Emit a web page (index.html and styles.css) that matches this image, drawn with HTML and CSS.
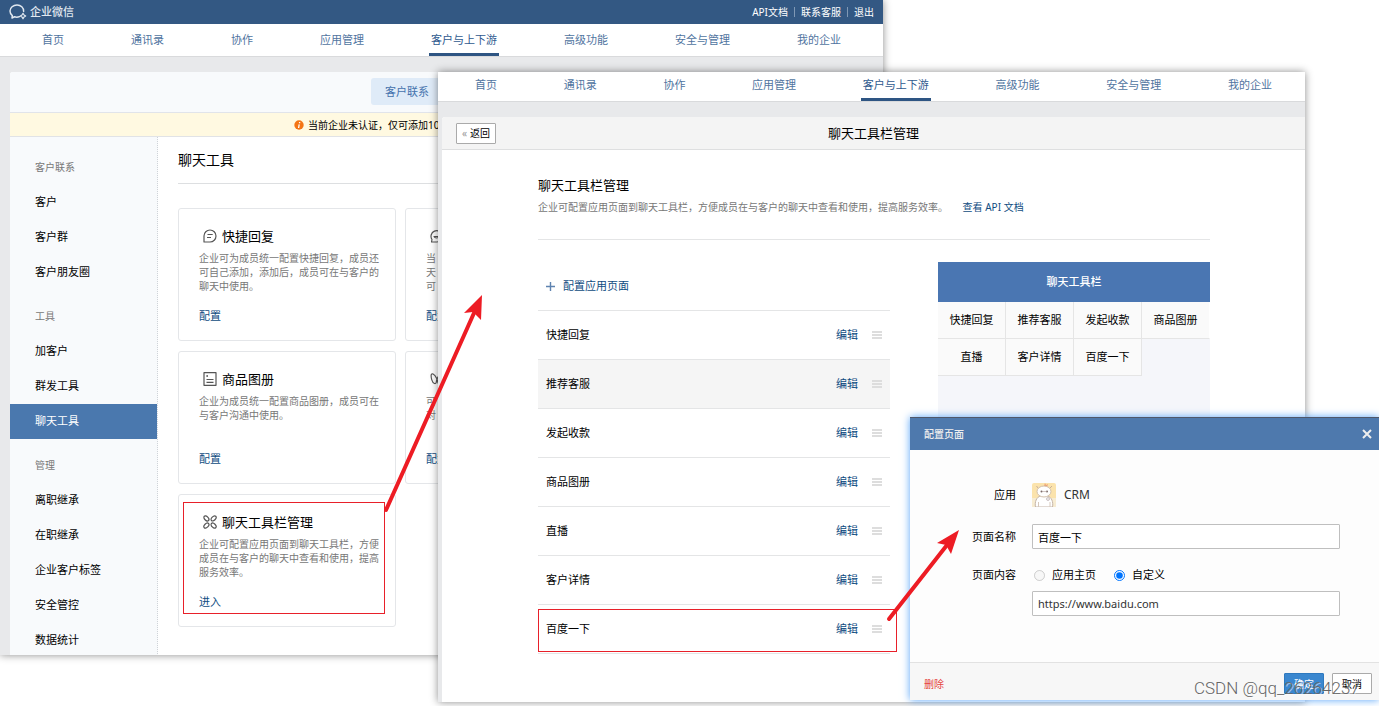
FILE: index.html
```html
<!DOCTYPE html>
<html lang="zh-CN">
<head>
<meta charset="utf-8">
<title>企业微信</title>
<link rel="stylesheet" href="styles.css">
</head>
<body>
<div class="desktop">

  <section class="window window-tools">
    <header class="topbar">
      <a class="brand" href="#">
        <svg class="brand-logo" viewBox="0 0 18 16" width="18" height="16" fill="none" stroke="currentColor" stroke-width="1.5" stroke-linecap="round" stroke-linejoin="round">
          <path d="M14.6 7.4C14.8 3.6 11.8 1 8 1S1 3.600 1 7c0 2 .9 3.500 2.300 4.600L3 14l2.500-1.200c1.700.5 3.500.4 5-.2"/>
          <path d="M14 9.300l1 1.700 1.700 1-1.700 1-1 1.800-1-1.800-1.700-1 1.700-1z" stroke-width="1.200"/>
        </svg>
        <span>企业微信</span>
      </a>
      <nav class="toplinks">
        <a href="#">API文档</a><a href="#">联系客服</a><a href="#">退出</a>
      </nav>
    </header>
    <nav class="mainnav">
      <a href="#">首页</a><a href="#">通讯录</a><a href="#">协作</a><a href="#">应用管理</a><a href="#" class="current">客户与上下游</a><a href="#">高级功能</a><a href="#">安全与管理</a><a href="#">我的企业</a>
    </nav>
    <div class="panel">
      <div class="tabs"><button type="button" class="tab">客户联系</button></div>
      <div class="notice">
        <svg viewBox="0 0 10 10" width="10" height="10"><circle cx="5" cy="5" r="4.700" fill="#f47414"/><path d="M5.600 2v1.200M5.200 4.300L4.600 8" stroke="#fff" stroke-width="1.300"/></svg>
        <span>当前企业未认证，仅可添加10</span>
      </div>
      <div class="columns">
        <aside class="sidebar">
          <h3>客户联系</h3>
          <a href="#">客户</a><a href="#">客户群</a><a href="#">客户朋友圈</a>
          <h3>工具</h3>
          <a href="#">加客户</a><a href="#">群发工具</a><a href="#" class="selected">聊天工具</a>
          <h3>管理</h3>
          <a href="#">离职继承</a><a href="#">在职继承</a><a href="#">企业客户标签</a><a href="#">安全管控</a><a href="#">数据统计</a>
        </aside>
        <main class="tools">
          <h1>聊天工具</h1>
          <div class="cards">
            <article class="card">
              <h2><svg viewBox="0 0 14 14" width="14" height="14" class="icon"><path d="M1 13V7a6 6 0 1 1 6 6z"/><path d="M4.500 5.500h5.200M4 8.500h4"/></svg>快捷回复</h2>
              <p>企业可为成员统一配置快捷回复，成员还可自己添加，添加后，成员可在与客户的聊天中使用。</p>
              <a href="#">配置</a>
            </article>
            <article class="card">
              <h2><svg viewBox="0 0 14 14" width="14" height="14" class="icon"><path d="M2 10.500A5.700 5.700 0 1 1 7 13H1.500z"/><path d="M4 7.500c1 2 4 2 5.500 0z"/></svg></h2>
              <p>当<br>天<br>可</p>
              <a href="#">配置</a>
            </article>
            <article class="card">
              <h2><svg viewBox="0 0 14 14" width="14" height="14" class="icon"><path d="M1 .7h12v12.600H1z"/><path d="M3.500 4h1.300" stroke-width="1.800"/><path d="M3.500 7.500h7M3.500 10.300h7"/></svg>商品图册</h2>
              <p>企业为成员统一配置商品图册，成员可在与客户沟通中使用。</p>
              <a href="#">配置</a>
            </article>
            <article class="card">
              <h2><svg viewBox="0 0 14 14" width="14" height="14" class="icon"><path d="M7 7C4 1 1.500 1 1.200 3S2 11 4.500 11.500 6 9 7 7s3-6 5-5 .5 8-2 9.500S8 9 7 7z"/></svg></h2>
              <p>可<br>对</p>
              <a href="#">配置</a>
            </article>
            <article class="card">
              <h2><svg viewBox="0 0 14 14" width="14" height="14" class="icon"><g id="petals"><ellipse cx="3.400" cy="3.400" rx="3" ry="1.900" transform="rotate(45 3.400 3.400)"/><ellipse cx="10.600" cy="3.400" rx="3" ry="1.900" transform="rotate(-45 10.600 3.400)"/><ellipse cx="3.400" cy="10.600" rx="3" ry="1.900" transform="rotate(-45 3.400 10.600)"/><ellipse cx="10.600" cy="10.600" rx="3" ry="1.900" transform="rotate(45 10.600 10.600)"/></g></svg>聊天工具栏管理</h2>
              <p>企业可配置应用页面到聊天工具栏，方便成员在与客户的聊天中查看和使用，提高服务效率。</p>
              <a href="#">进入</a>
            </article>
          </div>
        </main>
      </div>
    </div>
  </section>

  <section class="window window-manage">
    <nav class="mainnav">
      <a href="#">首页</a><a href="#">通讯录</a><a href="#">协作</a><a href="#">应用管理</a><a href="#" class="current">客户与上下游</a><a href="#">高级功能</a><a href="#">安全与管理</a><a href="#">我的企业</a>
    </nav>
    <div class="manage-panel">
      <header class="manage-head">
        <button type="button" class="back"><span class="chevrons">«</span>返回</button>
        <h1>聊天工具栏管理</h1>
      </header>
      <main class="manage-body">
        <div class="intro">
          <h2>聊天工具栏管理</h2>
          <p>企业可配置应用页面到聊天工具栏，方便成员在与客户的聊天中查看和使用，提高服务效率。 <a href="#">查看 API 文档</a></p>
        </div>
        <div class="manage-columns">
          <ul class="pages">
            <li><button type="button" class="add"><svg viewBox="0 0 9 9" width="9" height="9"><path d="M4.500 0v9M0 4.500h9" stroke="#5f83b0" stroke-width="1.400"/></svg>配置应用页面</button></li>
            <li><span>快捷回复</span><a href="#">编辑</a><i class="grip"></i></li>
            <li class="hovered"><span>推荐客服</span><a href="#">编辑</a><i class="grip"></i></li>
            <li><span>发起收款</span><a href="#">编辑</a><i class="grip"></i></li>
            <li><span>商品图册</span><a href="#">编辑</a><i class="grip"></i></li>
            <li><span>直播</span><a href="#">编辑</a><i class="grip"></i></li>
            <li><span>客户详情</span><a href="#">编辑</a><i class="grip"></i></li>
            <li><span>百度一下</span><a href="#">编辑</a><i class="grip"></i></li>
          </ul>
          <div class="preview">
            <h3>聊天工具栏</h3>
            <div class="preview-grid">
              <span>快捷回复</span><span>推荐客服</span><span>发起收款</span><span>商品图册</span>
              <span>直播</span><span>客户详情</span><span>百度一下</span>
            </div>
          </div>
        </div>
      </main>
    </div>
  </section>

  <form class="dialog">
    <header class="dialog-head">
      <h2>配置页面</h2>
      <button type="button" class="close" aria-label="关闭"><svg viewBox="0 0 10 10" width="10" height="10"><path d="M1 1l8 8M9 1L1 9" stroke="currentColor" stroke-width="2"/></svg></button>
    </header>
    <div class="dialog-body">
      <span class="label">应用</span>
      <div class="app">
        <svg viewBox="0 0 24 24" width="24" height="24">
          <rect width="24" height="24" rx="2" fill="#fbe3ac"/>
          <path d="M0 15h24v9H0z" fill="#f7ecd2"/>
          <path d="M12 3l1-3 1 2 2-1-1 3z" fill="#f0a070"/>
          <path d="M6 5L4.500 3M18 5l2-2" stroke="#c9b09a"/>
          <path d="M3.500 24c-1-5 1-10 5-11h7c4 1 6 6 5 11z" fill="#fff" stroke="#c5b5a8"/>
          <path d="M6.500 24v-5M18 24v-5" stroke="#d6c8bc"/>
          <ellipse cx="12" cy="8.500" rx="7" ry="5.500" fill="#fff" stroke="#d2c0ac"/>
          <circle cx="9.500" cy="8.500" r="1" fill="#7a6a68"/><circle cx="15" cy="8.500" r="1" fill="#7a6a68"/>
          <path d="M10 8.500h5" stroke="#b0a09c" stroke-width=".6"/>
          <circle cx="16" cy="16" r="1.500" fill="#eee" stroke="#bbaeb0" stroke-width=".7"/>
        </svg>
        <span>CRM</span>
      </div>
      <label class="label" for="page-name">页面名称</label>
      <input class="text" id="page-name" type="text" value="百度一下">
      <span class="label">页面内容</span>
      <div class="choices">
        <label><input type="radio" name="content" disabled>应用主页</label>
        <label><input type="radio" name="content" checked>自定义</label>
      </div>
      <input class="text url" type="text" value="https://www.baidu.com" aria-label="页面地址">
    </div>
    <footer class="dialog-foot">
      <a class="delete" href="#">删除</a>
      <button type="button" class="primary">确定</button>
      <button type="button" class="plain">取消</button>
    </footer>
  </form>

  <svg class="marks" viewBox="0 0 1379 706" width="1379" height="706">
    <g fill="none" stroke="#e8202a">
      <rect x="183.500" y="502.500" width="201" height="111"/>
      <rect x="538.500" y="609.500" width="358" height="42"/>
    </g>
    <g stroke="#ed1c24" stroke-linecap="round" stroke-width="4">
      <path d="M386 510L474 313"/>
      <path d="M889 619L947 545"/>
    </g>
    <g fill="#ed1c24">
      <path d="M482 295l-18 18 9-1 8 8z"/>
      <path d="M959 530l-22 13 9 2 5 9z"/>
    </g>
  </svg>
  <span class="watermark">CSDN @qq_26264237</span>
</div>
</body>
</html>
```
FILE: styles.css
```css
* { box-sizing: border-box; }
body {
  margin: 0;
  background: #fff;
  color: #000;
  font: 11px/16px "Noto Sans", "Noto Sans CJK SC", sans-serif;
}
h1, h2, h3, p, ul { margin: 0; padding: 0; font-weight: 400; }
a { color: #0f4c81; text-decoration: none; }
button, input { font: inherit; color: inherit; margin: 0; }
button { cursor: pointer; }

.desktop { position: relative; min-height: 706px; overflow: hidden; }
.window { position: absolute; background: #e8e9eb; overflow: hidden; box-shadow: 0 0 8px rgba(0, 0, 0, .45); }
.window-tools { left: 0; top: 0; width: 883px; height: 655px; }
.window-manage { left: 438px; top: 72px; width: 867px; }

/* Top bar and navigation */
.topbar {
  display: flex; align-items: center; justify-content: space-between;
  height: 24px; padding: 0 9px; background: #335883; color: #fff;
}
.brand { display: flex; align-items: center; gap: 3px; color: #e1e8f0; height: 22px; font-weight: 500; }
.toplinks { display: flex; font-size: 10px; height: 22px; align-items: center; }
.toplinks a { color: #fff; line-height: 10px; }
.toplinks a + a { margin-left: 6px; padding-left: 6px; border-left: 1px solid #7f98b5; }
.mainnav {
  display: flex; justify-content: space-between; height: 33px; padding: 0 42px;
  background: #fff; border-bottom: 1px solid #d9dadc;
}
.mainnav a { display: flex; align-items: center; color: #5074a0; position: relative; }
.mainnav .current { color: #2f5a8f; }
.mainnav .current::after { content: ""; position: absolute; left: -2px; right: -2px; bottom: 0; height: 3px; background: #2e5583; }
.window-manage .mainnav { height: 30px; padding: 0 33px 0 37px; }
.window-manage .mainnav a { padding-bottom: 3px; }

/* Chat tools window */
.panel { margin: 15px 0 0 10px; background: #fff; border-radius: 3px 0 0 0; overflow: hidden; }
.tabs { height: 41px; padding: 6px 0 0 361px; background: #f8fafc; border-bottom: 1px solid #e1e4ea; }
.tab { height: 27px; padding: 0 14px; border: 0; border-radius: 3px; background: #dfebf8; color: #4472ad; }
.notice {
  display: flex; align-items: center; gap: 4px; height: 24px; padding-left: 284px;
  background: #fff9e1; border-bottom: 1px solid #e1e3e6; font-size: 10px;
}
.columns { display: flex; }
.sidebar { width: 148px; padding-top: 13px; background: #f8fafc; border-right: 1px dotted #cfd3d8; }
.sidebar h3, .sidebar a { display: block; height: 35px; line-height: 34px; padding-left: 25px; }
.sidebar h3 { font-size: 10px; color: #777; }
.sidebar a + h3 { margin-top: 9px; }
.sidebar a { color: #000; }
.sidebar .selected { background: #4a78ae; color: #fff; }
.tools { flex: 1; padding: 0 20px; }
.tools h1 { font-size: 14px; height: 47px; line-height: 46px; border-bottom: 1px solid #dddfe1; }
.cards { display: grid; grid-template-columns: repeat(2, 218px); gap: 10px 9px; padding-top: 24px; }
.card { display: flex; flex-direction: column; height: 133px; padding: 18px 15px 0 20px; border: 1px solid #e4e6e9; border-radius: 3px; }
.card h2 { display: flex; align-items: center; gap: 5px; height: 18px; padding-left: 4px; font-size: 13px; }
.card p { height: 54px; padding-top: 6px; font-size: 10px; line-height: 14px; color: #777; }
.card a { margin-top: 9px; }
.icon { fill: none; stroke: #555; stroke-width: 1.2; stroke-linejoin: round; }

/* Toolbar management window */
.manage-panel { margin: 15px 0 0 4px; background: #fff; border-radius: 3px 0 0 0; overflow: hidden; }
.manage-head {
  display: grid; grid-template-columns: 1fr auto 1fr; align-items: center; justify-items: start;
  height: 33px; padding: 0 14px; background: #f4f4f4; border-bottom: 1px solid #dedfe0;
}
.manage-head h1 { font-size: 13px; }
.back { height: 21px; padding: 0 5px; border: 1px solid #aaa; border-radius: 1px; background: #fff; font-size: 10px; line-height: 16px; }
.chevrons { margin-right: 3px; color: #999; }
.manage-body { padding: 26px 95px 48px 96px; }
.intro { height: 64px; border-bottom: 1px solid #e4e5e6; }
.intro h2 { font-size: 13px; line-height: 18px; margin-bottom: 4px; }
.intro p { font-size: 10px; line-height: 18px; color: #777; }
.intro a { margin-left: 12px; }
.manage-columns { display: flex; justify-content: space-between; align-items: stretch; padding-top: 22px; }
.pages { width: 352px; list-style: none; }
.pages li { display: flex; align-items: center; gap: 14px; height: 49px; padding: 0 8px; border-bottom: 1px solid #e4e5e6; }
.pages li span { flex: 1; }
.pages .hovered { background: #f5f5f5; }
.add { display: flex; align-items: center; gap: 8px; padding: 0; border: 0; background: none; color: #0f4c81; }
.grip { width: 10px; height: 8px; border-top: 2px solid #ddd; border-bottom: 2px solid #ddd; background: linear-gradient(transparent 1px, #ddd 1px, #ddd 3px, transparent 3px) padding-box; }
.preview { width: 272px; background: #f5f6fa; }
.preview h3 { height: 40px; line-height: 40px; text-align: center; background: #4a76b2; color: #fff; font-size: 11px; font-weight: 500; }
.preview-grid { display: grid; grid-template-columns: repeat(4, 1fr); }
.preview-grid span { height: 37px; line-height: 36px; text-align: center; background: #fafafa; border-right: 1px solid #e5e5e5; border-bottom: 1px solid #e5e5e5; }
.preview-grid span:nth-child(4n) { border-right-color: #fff; }

/* Page configuration dialog */
.dialog { position: absolute; left: 910px; top: 417px; width: 469px; background: #fdfdfd; box-shadow: 0 0 8px #58a4f8; }
.dialog-head { display: flex; align-items: center; justify-content: space-between; height: 33px; padding: 0 7px 0 14px; background: #4e79ad; border-top: 1px solid #50586a; color: #eee; }
.dialog-head h2 { font-size: 10px; font-weight: 500; }
.close { display: flex; padding: 0; border: 0; background: none; }
.dialog-body { display: grid; grid-template-columns: 90px 1fr; column-gap: 16px; align-items: center; height: 212px; padding: 33px 39px 0 16px; align-content: start; grid-template-rows: 24px 59px 18px 38px; }
.label { text-align: right; }
.app { display: flex; align-items: center; gap: 8px; color: #333; }
.app span { font-size: 12px; }
.text { width: 100%; height: 25px; padding: 0 5px; border: 1px solid #bfbfbf; border-radius: 1px; background: #fff; }
.url { grid-column: 2; color: #333; }
.choices { display: flex; gap: 18px; }
.choices label { display: flex; align-items: center; gap: 7px; }
.choices input { width: 11px; height: 11px; margin-left: 2px; }
.choices label + label input { margin-left: 0; }
.dialog-foot { display: flex; align-items: center; gap: 8px; height: 38px; padding: 4px 7px 0 14px; background: #f7f7f7; border-top: 1px solid #e2e2e2; font-size: 10px; }
.delete { margin-right: auto; color: #e64340; }
.dialog-foot button { width: 40px; height: 21px; padding: 0; border: 1px solid #aaa; border-radius: 1px; background: #fff; line-height: 18px; }
.dialog-foot .primary { background: #3a87cf; border-color: #2e79bf; color: #fff; }

/* Annotations */
.marks { position: absolute; left: 0; top: 0; pointer-events: none; }
.watermark { position: absolute; left: 1194px; top: 678px; font: 17px/20px Roboto, "Liberation Sans", sans-serif; font-weight: 300; color: #666; text-shadow: 1px 1px 0 rgba(255, 255, 255, .6); pointer-events: none; }
```
